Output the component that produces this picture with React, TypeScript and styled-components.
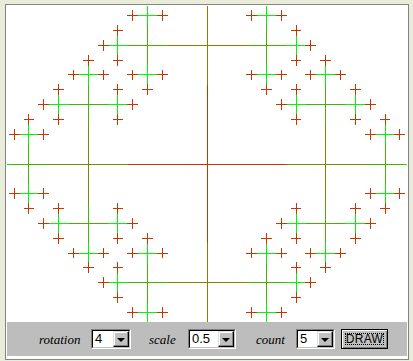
import React from "react";
import styled, { createGlobalStyle } from "styled-components";

const GlobalStyle = createGlobalStyle`
  html, body { margin: 0; padding: 0; }
  body {
    background: #e8ecd8;
    font-family: "Liberation Sans", Arial, sans-serif;
  }
`;

const Page = styled.div`
  padding: 4px 4px 1px 5px;
  width: 413px;
  height: 361px;
  box-sizing: border-box;
`;

const Frame = styled.div`
  width: 404px;
  height: 356px;
  box-sizing: border-box;
  border: 1px solid #858585;
  padding: 1px 1px 3px 1px;
  background: #ffffff;
  display: flex;
  flex-direction: column;
`;

const Canvas = styled.div`
  width: 400px;
  height: 316px;
  overflow: hidden;
  background: #ffffff;
  flex: none;
`;

const ControlBar = styled.div`
  height: 34px;
  background: #bdbdbd;
  display: flex;
  align-items: center;
  flex: none;
`;

const Label = styled.span<{ $gap: number; $w: number }>`
  margin-left: ${(p) => p.$gap}px;
  width: ${(p) => p.$w}px;
  font-family: "Liberation Serif", "Times New Roman", serif;
  font-style: italic;
  font-size: 13px;
  color: #000;
  white-space: nowrap;
  line-height: 14px;
  margin-top: 1px;
`;

const SelectBox = styled.div<{ $gap: number; $w: number }>`
  margin-left: ${(p) => p.$gap}px;
  width: ${(p) => p.$w}px;
  height: 20px;
  box-sizing: border-box;
  border-top: 1px solid #808080;
  border-left: 1px solid #808080;
  border-right: 1px solid #ffffff;
  border-bottom: 1px solid #ffffff;
  display: flex;
`;

const SelectInner = styled.div`
  flex: 1;
  display: flex;
  border-top: 1px solid #000;
  border-left: 1px solid #000;
  border-right: 1px solid #c0c0c0;
  border-bottom: 1px solid #c0c0c0;
  background: #fff;
`;

const SelectValue = styled.span`
  flex: 1;
  font-family: "Liberation Sans", Arial, sans-serif;
  font-size: 13px;
  line-height: 16px;
  padding-left: 2px;
  color: #000;
`;

const DropButton = styled.div`
  width: 16px;
  height: 16px;
  box-sizing: border-box;
  background: #c0c0c0;
  border-top: 1px solid #dfdfdf;
  border-left: 1px solid #dfdfdf;
  border-right: 1px solid #000;
  border-bottom: 1px solid #000;
  box-shadow: inset -1px -1px 0 #808080, inset 1px 1px 0 #fff;
  display: flex;
  align-items: center;
  justify-content: center;
`;

const Arrow = styled.div`
  width: 0;
  height: 0;
  border-left: 4px solid transparent;
  border-right: 4px solid transparent;
  border-top: 4px solid #000;
  margin-top: 1px;
`;

const DrawButton = styled.div<{ $gap: number }>`
  margin-left: ${(p) => p.$gap}px;
  width: 47px;
  height: 20px;
  box-sizing: border-box;
  border: 1px solid #000;
  background: #c0c0c0;
  box-shadow: inset 1px 1px 0 #fff, inset -1px -1px 0 #808080;
  display: flex;
  align-items: center;
  justify-content: center;
  padding: 3px;
`;

const FocusRing = styled.span`
  flex: 1;
  align-self: stretch;
  border: 1px dotted #000;
  display: flex;
  align-items: center;
  justify-content: center;
  font-family: "Liberation Sans", Arial, sans-serif;
  font-size: 12px;
  color: #000;
  letter-spacing: 0.3px;
`;

type Seg = { x: number; y: number; w: number; h: number; c: string };

const COLORS = ["#c43800", "#848000", "#48b000", "#00f800", "#c43800"];
const CX = 200;
const CY = 158;
const L0 = 118.7;
const COUNT = 5;
const DIRS = [
  [1, 0],
  [0, 1],
  [-1, 0],
  [0, -1],
];

function pix(a: number, b: number, c: number, d: number, col: string): Seg {
  return {
    x: Math.min(a, c),
    y: Math.min(b, d),
    w: Math.abs(c - a) + 1,
    h: Math.abs(d - b) + 1,
    c: col,
  };
}

function buildFractal(): Seg[] {
  const segs: Seg[] = [];
  const rec = (x: number, y: number, dir: number | null, d: number, L: number) => {
    if (d >= COUNT) return;
    const ds = dir === null ? [0, 1, 2, 3] : [dir, (dir + 1) % 4, (dir + 3) % 4];
    const px = Math.floor(x);
    const py = Math.floor(y);
    for (const k of ds) {
      const [dx, dy] = DIRS[k];
      const mx = Math.floor(x + (dx * L * 2) / 3);
      const my = Math.floor(y + (dy * L * 2) / 3);
      const nx = Math.floor(x + dx * L);
      const ny = Math.floor(y + dy * L);
      segs.push(pix(px, py, mx, my, COLORS[d]));
      if (d + 1 < COUNT) segs.push(pix(mx, my, nx, ny, COLORS[d + 1]));
    }
    for (const k of ds) {
      rec(x + DIRS[k][0] * L, y + DIRS[k][1] * L, k, d + 1, L / 2);
    }
  };
  rec(CX, CY, null, 0, L0);
  return segs;
}

const SEGS = buildFractal();

function Fractal() {
  return (
    <svg width={400} height={316} viewBox="0 0 400 316" shapeRendering="crispEdges">
      {SEGS.map((s, i) => (
        <rect key={i} x={s.x} y={s.y} width={s.w} height={s.h} fill={s.c} />
      ))}
    </svg>
  );
}

function Select({ value, gap, width }: { value: string; gap: number; width: number }) {
  return (
    <SelectBox $gap={gap} $w={width}>
      <SelectInner>
        <SelectValue>{value}</SelectValue>
        <DropButton>
          <Arrow />
        </DropButton>
      </SelectInner>
    </SelectBox>
  );
}

export default function App() {
  return (
    <>
      <GlobalStyle />
      <Page>
        <Frame>
          <Canvas>
            <Fractal />
          </Canvas>
          <ControlBar>
            <Label $gap={32} $w={38}>rotation</Label>
            <Select value="4" gap={14} width={40} />
            <Label $gap={18} $w={25}>scale</Label>
            <Select value="0.5" gap={14} width={48} />
            <Label $gap={20} $w={28}>count</Label>
            <Select value="5" gap={12} width={39} />
            <DrawButton $gap={6}>
              <FocusRing>DRAW</FocusRing>
            </DrawButton>
          </ControlBar>
        </Frame>
      </Page>
    </>
  );
}
